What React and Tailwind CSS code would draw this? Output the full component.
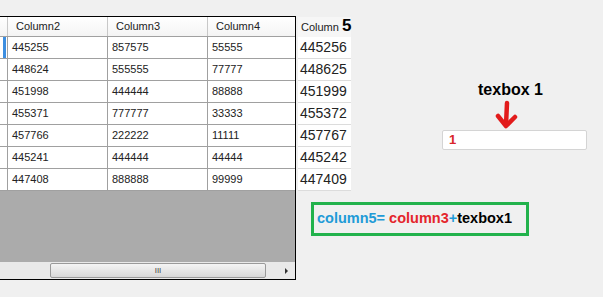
const rows = [
  ['445255', '857575', '55555', '445256'],
  ['448624', '555555', '77777', '448625'],
  ['451998', '444444', '88888', '451999'],
  ['455371', '777777', '33333', '455372'],
  ['457766', '222222', '11111', '457767'],
  ['445241', '444444', '44444', '445242'],
  ['447408', '888888', '99999', '447409'],
]

function DataGrid() {
  return (
    <div className="mt-4 flex h-[264px] w-[296px] flex-col border-y border-r border-black bg-white font-['Liberation_Sans',Arial,sans-serif] text-[11px] text-[#222]">
      <div className="flex h-5 border-b border-[#a0a0a0] bg-gradient-to-b from-white to-[#f4f4f4]">
        <div className="w-2 border-r border-[#c8c8c8]" />
        <div className="flex w-[100px] items-center border-r border-[#c8c8c8] pl-2">Column2</div>
        <div className="flex w-[100px] items-center border-r border-[#c8c8c8] pl-2">Column3</div>
        <div className="flex flex-1 items-center pl-2">Column4</div>
      </div>
      {rows.map((r, i) => (
        <div key={i} className="flex h-[22px] border-b border-[#a0a0a0]">
          <div className="flex w-2 border-r border-[#a0a0a0] pl-[3px]">
            {i === 0 && <div className="w-[3px] bg-[#3d8ee0]" />}
          </div>
          <div className="flex w-[100px] items-center border-r border-[#a0a0a0] pl-[4px]">{r[0]}</div>
          <div className="flex w-[100px] items-center border-r border-[#a0a0a0] pl-[4px]">{r[1]}</div>
          <div className="flex flex-1 items-center pl-[4px]">{r[2]}</div>
        </div>
      ))}
      <div className="flex-1 bg-[#ababab]" />
      <div className="flex h-[17px] items-center bg-[#e9e9e9]">
        <div className="ml-[50px] flex h-[15px] w-[216px] items-center justify-center rounded-[2px] border border-[#9a9a9a] bg-gradient-to-b from-[#f4f4f4] to-[#d8d8d8] text-[8px] leading-none text-[#444]">
          III
        </div>
        <div className="ml-auto mr-[7px] h-0 w-0 border-y-[3px] border-l-[3px] border-y-transparent border-l-[#333]" />
      </div>
    </div>
  )
}

function Column5() {
  return (
    <div className="ml-[2px] mt-[17px] w-[53px] bg-white font-['Liberation_Sans',Arial,sans-serif] text-[#222]">
      <div className="flex h-5 items-end gap-[3px] bg-[#f6f6f6] pb-[2px] pl-[3px] text-[11px]">
        <span>Column</span>
        <span className="text-[17px] font-bold leading-[18px] text-black">5</span>
      </div>
      {rows.map((r, i) => (
        <div key={i} className="flex h-[22px] items-center border-b border-[#dcdcdc] pl-[2px] text-[14px]">
          {r[3]}
        </div>
      ))}
    </div>
  )
}

function TextboxGroup() {
  return (
    <div className="ml-auto mr-4 mt-[80px] flex w-[145px] flex-col items-center font-['Liberation_Sans',Arial,sans-serif]">
      <div className="mr-2 text-[16px] font-bold leading-5 text-black">texbox 1</div>
      <svg width="24" height="30" viewBox="0 0 24 30" className="-ml-[16px]">
        <path d="M12 3 L11 25" stroke="#e21b1b" strokeWidth="4.5" fill="none" strokeLinecap="round" />
        <path d="M3 16 L11 26 L20 17" stroke="#e21b1b" strokeWidth="4.5" fill="none" strokeLinecap="round" strokeLinejoin="round" />
      </svg>
      <div className="flex h-5 w-[145px] items-center rounded-[2px] border border-[#d4d4d4] bg-white pl-[6px] text-[13px] font-bold text-[#d9262a]">
        1
      </div>
    </div>
  )
}

export default function App() {
  return (
    <div className="flex h-[297px] w-[603px] overflow-hidden bg-[#f0f0f0]">
      <DataGrid />
      <div className="flex flex-1 flex-col">
        <div className="flex">
          <Column5 />
          <TextboxGroup />
        </div>
        <div className="ml-[15px] mt-[11px] flex h-[34px] w-[218px] items-center border-[3px] border-[#22b24c] pl-[3px] font-['Liberation_Sans',Arial,sans-serif] text-[14.5px] font-bold">
          <span className="text-[#1f9bd7]">column5=</span>
          <span className="ml-[4px] text-[#e4252b]">column3</span>
          <span className="text-[#1f9bd7]">+</span>
          <span className="text-black">texbox1</span>
        </div>
      </div>
    </div>
  )
}
